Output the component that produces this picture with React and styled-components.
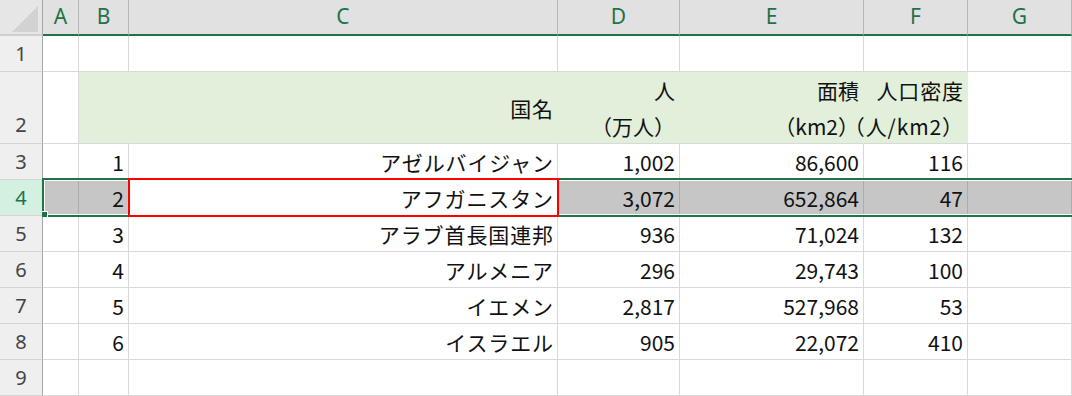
import React from 'react'
import styled, {createGlobalStyle, css} from 'styled-components'

const EXCEL_GREEN = '#217346'
const GRID = '#d9d9d9'
const HEAD_BG = '#e1e1e1'
const HEAD_LINE = '#b7b7b7'
const ROW_HEAD_BG = '#efefef'
const FILL_GREEN = '#e2efda'
const SELECT_GRAY = '#c6c6c6'

const GlobalStyle = createGlobalStyle`
  html, body {
    margin: 0;
    padding: 0;
    background: #fff;
  }
  body {
    font-family: "Noto Sans CJK JP", "Noto Sans", sans-serif;
    overflow: hidden;
  }
`

const Sheet = styled.div`
  position: relative;
  display: grid;
  grid-template-columns: 43px 36px 50px 429px 122px 184px 104px 104px;
  grid-template-rows: 36px 36px 72px repeat(7, 36px);
  width: 1072px;
  height: 396px;
  overflow: hidden;
`

const Corner = styled.div`
  position: relative;
  background: #e6e6e6;
  border-right: 1px solid #a6a6a6;
  border-bottom: 2px solid #cfcfcf;
  box-sizing: border-box;

  &::after {
    content: '';
    position: absolute;
    right: 4px;
    bottom: 2px;
    width: 0;
    height: 0;
    border-left: 26px solid transparent;
    border-bottom: 26px solid #d2d2d2;
  }
`

const ColHeader = styled.div`
  display: flex;
  align-items: center;
  justify-content: center;
  background: ${HEAD_BG};
  border-right: 1px solid ${HEAD_LINE};
  border-bottom: 2px solid ${EXCEL_GREEN};
  box-sizing: border-box;
  color: ${EXCEL_GREEN};
  font-family: "Noto Sans", "Noto Sans CJK JP", sans-serif;
  font-size: 21px;
  padding-bottom: 2px;
`

const RowHeader = styled.div`
  display: flex;
  align-items: ${p => (p.$tall ? 'flex-end' : 'center')};
  justify-content: center;
  background: ${p => (p.$current ? '#d3f0e0' : ROW_HEAD_BG)};
  border-right: 1px solid #a6a6a6;
  border-bottom: 1px solid #d4d4d4;
  box-sizing: border-box;
  color: ${p => (p.$current ? EXCEL_GREEN : '#444')};
  font-family: "Noto Sans", "Noto Sans CJK JP", sans-serif;
  font-size: 20px;
  line-height: 36px;
`

const Cell = styled.div`
  display: flex;
  flex-direction: column;
  justify-content: center;
  align-items: flex-end;
  padding-right: 4px;
  box-sizing: border-box;
  background: #fff;
  border-right: 1px solid ${GRID};
  border-bottom: 1px solid ${GRID};
  color: #111;
  font-size: 21px;
  line-height: 36px;
  white-space: nowrap;

  ${p => p.$wide && css`
    letter-spacing: 0.9px;
    padding-right: 3px;
  `}

  ${p => p.$fill && css`
    background: ${FILL_GREEN};
    border-right-color: ${FILL_GREEN};
  `}

  ${p => p.$selected && css`
    background: ${SELECT_GRAY};
    border-right-color: #adadad;
  `}
`

const SelectionFrame = styled.div`
  position: absolute;
  left: 42px;
  top: 178px;
  width: 1040px;
  height: 39px;
  box-sizing: border-box;
  border: 2px solid ${EXCEL_GREEN};
  border-right: none;
  box-shadow: inset 0 0 0 1px #fff;
  pointer-events: none;
`

const FillHandle = styled.span`
  position: absolute;
  left: -2px;
  bottom: -2px;
  width: 5px;
  height: 5px;
  background: ${EXCEL_GREEN};
  border-top: 1px solid #fff;
  border-right: 1px solid #fff;
`

const Annotation = styled.div`
  position: absolute;
  left: 128px;
  top: 178px;
  width: 431px;
  height: 39px;
  box-sizing: border-box;
  border: 2px solid #ff0000;
  pointer-events: none;
`

const columns = ['A', 'B', 'C', 'D', 'E', 'F', 'G']

const countries = [
  ['1', 'アゼルバイジャン', '1,002', '86,600', '116'],
  ['2', 'アフガニスタン', '3,072', '652,864', '47'],
  ['3', 'アラブ首長国連邦', '936', '71,024', '132'],
  ['4', 'アルメニア', '296', '29,743', '100'],
  ['5', 'イエメン', '2,817', '527,968', '53'],
  ['6', 'イスラエル', '905', '22,072', '410'],
]

const headings = [[], ['国名'], ['人', '（万人）'], ['面積', '（km2）'], ['人口密度', '（人/km2）']]

const SELECTED_ROW = 4

export default function App() {
  return (
    <>
      <GlobalStyle/>
      <Sheet>
        <Corner/>
        {columns.map(c => <ColHeader key={c}>{c}</ColHeader>)}

        <RowHeader>1</RowHeader>
        {columns.map(c => <Cell key={c}/>)}

        <RowHeader $tall>2</RowHeader>
        <Cell/>
        {headings.map((lines, i) => (
          <Cell key={i} $fill $wide={i === 1 || i === 4}>
            {lines.map(l => <span key={l}>{l}</span>)}
          </Cell>
        ))}
        <Cell/>

        {countries.map((row, i) => {
          const rowNo = i + 3
          const selected = rowNo === SELECTED_ROW
          return (
            <React.Fragment key={rowNo}>
              <RowHeader $current={selected}>{rowNo}</RowHeader>
              <Cell $selected={selected}/>
              {row.map((value, j) => (
                <Cell key={j} $wide={j === 1} $selected={selected && j !== 1}>{value}</Cell>
              ))}
              <Cell $selected={selected}/>
            </React.Fragment>
          )
        })}

        <RowHeader>9</RowHeader>
        {columns.map(c => <Cell key={c}/>)}

        <SelectionFrame>
          <FillHandle/>
        </SelectionFrame>
        <Annotation/>
      </Sheet>
    </>
  )
}
